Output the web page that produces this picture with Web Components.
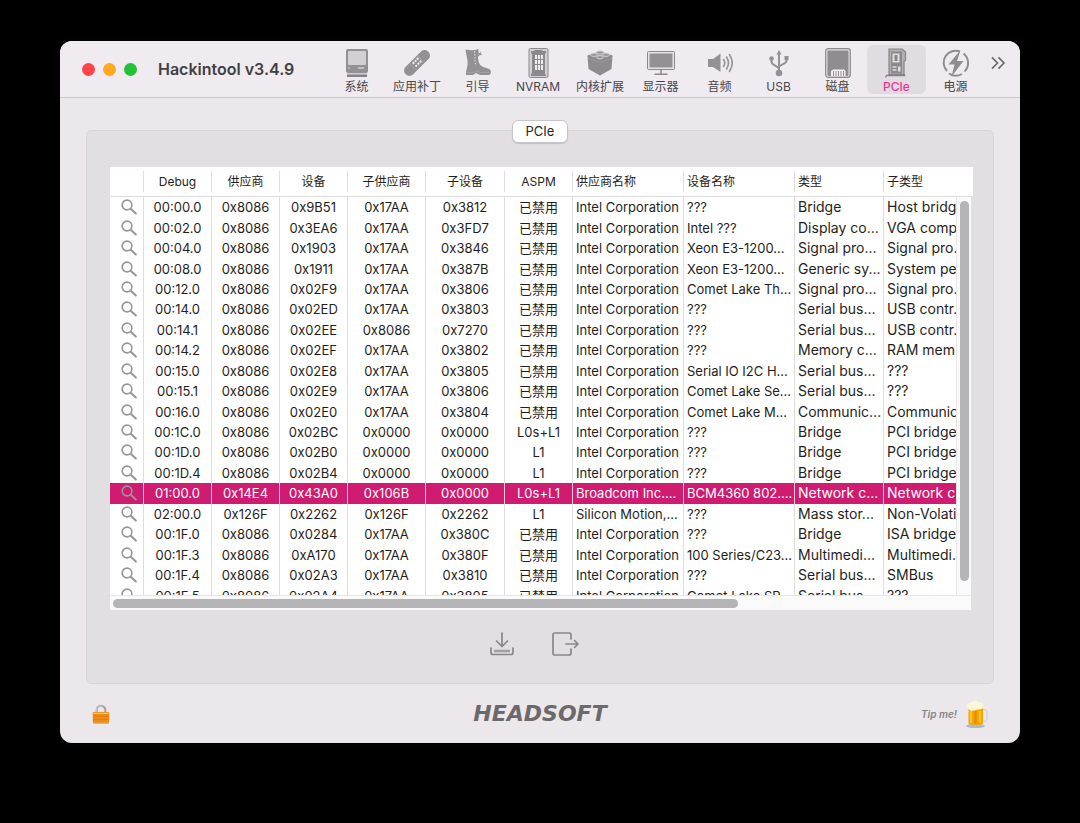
<!DOCTYPE html>
<html lang="zh-CN">
<head>
<meta charset="utf-8">
<title>Hackintool</title>
<style>
  body {
    margin: 0;
    background: #000;
    color: #1f1e20;
    font-family: Inter, "Noto Sans CJK SC", sans-serif;
    font-size: 13px;
  }
</style>
</head>
<body>
<hk-window>
  <hk-toolbar slot="toolbar" heading="Hackintool v3.4.9">
    <hk-tool icon="system" label="系统"></hk-tool>
    <hk-tool icon="patch" label="应用补丁" wide></hk-tool>
    <hk-tool icon="boot" label="引导"></hk-tool>
    <hk-tool icon="nvram" label="NVRAM" wide></hk-tool>
    <hk-tool icon="kext" label="内核扩展" wide></hk-tool>
    <hk-tool icon="display" label="显示器"></hk-tool>
    <hk-tool icon="audio" label="音频"></hk-tool>
    <hk-tool icon="usb" label="USB"></hk-tool>
    <hk-tool icon="disk" label="磁盘"></hk-tool>
    <hk-tool icon="pcie" label="PCIe" selected></hk-tool>
    <hk-tool icon="power" label="电源"></hk-tool>
  </hk-toolbar>
  <hk-panel tab="PCIe">
    <hk-devices></hk-devices>
    <hk-action slot="actions" icon="save" label="Save"></hk-action>
    <hk-action slot="actions" icon="export" label="Export"></hk-action>
  </hk-panel>
  <hk-footer slot="footer"></hk-footer>
</hk-window>

<script>
const ICONS = {
  system: '<rect x="3" y="0" width="22" height="24" rx="2" fill="#939194"/><rect x="5" y="2" width="18" height="14" rx="1" fill="#d2d0d3"/><path d="M15 19h6" stroke="#eee" stroke-width="1.2"/><circle cx="6" cy="19" r=".7" fill="#eee"/><path d="M4 24.500h20V28H4z" fill="#858386"/><path d="M4 25h20" stroke="#eee" stroke-width=".8"/>',
  patch: '<g transform="rotate(-45 14 14)"><rect x="-2" y="8.700" width="32" height="10.600" rx="5" fill="#939194"/><path d="M8.500 9v10.500M19.500 9v10.500" stroke="#a9a7aa" stroke-width=".7"/><g fill="#f0ebf0"><rect x="10.500" y="10.500" width="2" height="2"/><rect x="13.500" y="10.500" width="2" height="2"/><rect x="16.500" y="10.500" width="2" height="2"/><rect x="10.500" y="14.500" width="2" height="2"/><rect x="13.500" y="14.500" width="2" height="2"/><rect x="16.500" y="14.500" width="2" height="2"/></g></g>',
  boot: '<path d="M1.500.5C6 1.500 10 1.500 14.500 0c.3 4-.8 8-.3 11 .5 4 3 6.500 6.300 7.500 3.500 1 6.500 1.500 6.500 4.500 0 2-1 3-3 3h-8l-4-2-3 2H2c-.5-5 2.500-9 1.500-14C3 8 2 5 1.500.5z" fill="#939194"/><path d="M10.500 2c1 5-.5 9 1.500 14" fill="none" stroke="#e8e4e8" stroke-width="1" stroke-dasharray="1.500 1.500"/><path d="M14 7l3-3.500M14 4l3.500 2" fill="none" stroke="#939194" stroke-width="1.200"/><path d="M2.500 23.500h7l3-1.500 4 1.500h10" fill="none" stroke="#aeabae" stroke-width=".6"/>',
  nvram: '<rect x="5" y="-.5" width="19" height="29" rx="1.500" fill="#d4d1d4" stroke="#8b898c"/><path d="M7 2h3l1-1h7l1 1h3v2l-1 1v20l1 1v1H7v-2l1-1V5L7 4z" fill="#8b898c"/><g fill="#efecef"><rect x="11" y="6" width="2" height="4"/><rect x="14" y="6" width="2" height="4"/><rect x="17" y="6" width="2" height="4"/><rect x="11" y="11" width="2" height="4"/><rect x="14" y="11" width="2" height="4"/><rect x="17" y="11" width="2" height="4"/><rect x="11" y="16" width="2" height="5"/><rect x="14" y="16" width="2" height="5"/><rect x="17" y="16" width="2" height="5"/></g>',
  kext: '<path d="M1.500 6.500 14 2l12.500 4.500-1 13.500L14 26.500 2.500 20z" fill="#8d8b8e"/><g fill="#9a989b" stroke="#e6e2e6" stroke-width=".7"><ellipse cx="14" cy="3.500" rx="3.500" ry="1.700"/><ellipse cx="8" cy="5.800" rx="3.500" ry="1.700"/><ellipse cx="20" cy="5.800" rx="3.500" ry="1.700"/><ellipse cx="14" cy="8.200" rx="3.500" ry="1.700"/></g><path d="M2 9l12 4.500L26 9" fill="none" stroke="#9d9b9e" stroke-width=".7"/>',
  display: '<rect x=".5" y="2.500" width="27" height="18" rx="1" fill="#e6e3e6" stroke="#8b898c"/><rect x="2.500" y="4.500" width="23" height="14" fill="#939194"/><path d="M14 20.500v4M7.500 25.200h13" stroke="#8b898c" stroke-width="1.500"/>',
  audio: '<path d="M2 10h5l7.500-5.500v18.500L7 18H2z" fill="#939194"/><g fill="none" stroke="#939194" stroke-width="1.600" stroke-linecap="round"><path d="M17.500 10.500q2.500 3.500 0 7M20.500 8q4 6 0 12M23.500 5.500q5.500 8.500 0 17"/></g>',
  usb: '<g fill="none" stroke="#939194" stroke-width="2"><path d="M14 4v19M6.500 10v3c0 3 6.500 4 7.500 7M21.500 9v3c0 3-6.500 3-7.500 6"/></g><path d="M14 1l2.500 4.500h-5z" fill="#939194"/><circle cx="14" cy="24" r="3.300" fill="#939194"/><circle cx="6.500" cy="9.500" r="2.300" fill="#939194"/><rect x="19.500" y="7" width="4" height="4" fill="#939194"/>',
  disk: '<rect x="1.700" y="-.3" width="24.600" height="28.600" rx="2.500" fill="#e2dfe2" stroke="#8b898c" stroke-width="1.200"/><rect x="3.500" y="1.500" width="21" height="25.500" rx="1" fill="#8f8d90"/><path d="M7 27v-5l2-1.500h11l1.500 1.500v5z" fill="#f3f0f3"/><path d="M9.500 22v5M12 22v5M14.500 22v5M17 22v5M19.500 22v5" stroke="#8f8d90" stroke-width="1"/>',
  pcie: '<path d="M6 0h13l3.500 3v8l-1.500 2v12.500H6z" fill="#b2b0b3" stroke="#858386" stroke-width="1.200"/><path d="M8 2.500h11v22H8z" fill="#8b898c"/><rect x="9.500" y="4.500" width="7" height="9" fill="#e0dde0"/><rect x="11.500" y="6" width="3" height="6" fill="#858386"/><path d="M9.500 18h4M9.500 21h4" stroke="#dedbde" stroke-width="1.400"/><rect x="15" y="17.500" width="2.500" height="5" fill="#dedbde"/><path d="M2.500 28.500l1-2h18V25" fill="none" stroke="#858386" stroke-width="1.300"/>',
  power: '<g fill="none" stroke="#8f8d90" stroke-width="2"><path d="M18 2.500A12 12 0 0 0 5 22"/><path d="M7 24.500A12 12 0 0 0 20 25"/><path d="M21.500 4.500A12 12 0 0 1 22.500 22.500"/></g><path d="M18.500 1 6.500 15.500h6L9.500 27.500 21.500 12h-6.500z" fill="#8f8d90"/>',
  more: '<path d="M7.500 8l6 6-6 6M14.500 8l6 6-6 6" fill="none" stroke="#6a686b" stroke-width="1.700"/>',
  search: '<g fill="none" stroke="#98969a" stroke-width="2.800" stroke-linecap="round"><circle cx="10.500" cy="10.500" r="8.500"/><path d="M17 17l9 8.500" stroke-width="3.500"/></g>',
  save: '<g fill="none" stroke="#89878a" stroke-width="1.700" stroke-linecap="round" stroke-linejoin="round"><path d="M14 3v13M8.500 11l5.500 5.500 5.500-5.500M3 18v4.500q0 2 2 2h18q2 0 2-2V18"/></g><path d="M6 21h16" stroke="#a19fa2" stroke-width="2.500"/>',
  export: '<g fill="none" stroke="#89878a" stroke-width="1.700" stroke-linecap="round" stroke-linejoin="round"><path d="M20 9V5q0-2-2-2H4Q2 3 2 5v18q0 2 2 2h14q2 0 2-2v-4M15 14h12M23.500 10.500 27 14l-3.500 3.500"/></g>',
  lock: '<path d="M8.500 15V9a5.500 5.500 0 0 1 11 0v6" fill="none" stroke="#9fa2a8" stroke-width="2.600"/><path d="M8 12V9a6 6 0 0 1 8-5" fill="none" stroke="#d7d9dc" stroke-width="1"/><path d="M4 25.500h20" stroke="#b6a595" stroke-width="1.500"/><rect x="3.500" y="11.500" width="21" height="13.500" rx="1.500" fill="#ee8b16"/><path d="M4.500 13.300h19" stroke="#ffc45c" stroke-width="1.500"/><path d="M4.500 17h19M4.500 21h19" stroke="#d97706" stroke-width=".8"/>',
  beer: '<path d="M20 10h2.500q2.500 0 2.500 3v5q0 3-2.500 3H20" fill="none" stroke="#d4dce2" stroke-width="1.800"/><ellipse cx="13.500" cy="26" rx="9.500" ry="2" fill="#a9bcc8"/><path d="M6.500 7h14.500v17q-7 2-14.500 0z" fill="#f5a400"/><path d="M9 11v12M18 11v12" stroke="#fcc629" stroke-width="2.200"/><path d="M13.500 11v13" stroke="#e68a00" stroke-width="2"/><path d="M5.500 8c-1.500-4 2-5 3.500-5 2-3 6-3 8-.5 3.500-.5 5.500 2 4 5.500-2.500 2-5 1-7 2-3 1.500-6.500 1-8.500-2z" fill="#fdf6d8"/>'
};

function define(name, build) {
  customElements.define(name, class extends HTMLElement {
    constructor() {
      super();
      this.attachShadow({ mode: 'open' });
    }
    connectedCallback() {
      this.shadowRoot.innerHTML = build(this);
    }
  });
}

define('hk-icon', el => `
  <style>
    :host { display: block; width: 28px; height: 28px; flex: none; }
    svg { display: block; width: 100%; height: 100%; overflow: visible; }
  </style>
  <svg viewBox="0 0 28 28" aria-hidden="true">${ICONS[el.getAttribute('name')]}</svg>`);

define('hk-tool', el => `
  <style>
    :host { display: block; flex: none; width: 59px; }
    :host([wide]) { width: 62px; }
    button {
      display: flex; flex-direction: column; align-items: center; gap: 2px;
      box-sizing: border-box; width: 100%; height: 49px; padding: 4px 0 0;
      border: 0; border-radius: 6px; background: none;
      font: inherit; font-size: 12px; line-height: 16px; color: #484649; white-space: nowrap;
    }
    :host([selected]) button { background: #e1dce1; color: #f03293; font-weight: 500; }
  </style>
  <button type="button"><hk-icon name="${el.getAttribute('icon')}"></hk-icon><span>${el.getAttribute('label')}</span></button>`);

define('hk-toolbar', el => `
  <style>
    :host {
      display: flex; align-items: center; box-sizing: border-box; height: 57px;
      padding: 0 9px 0 22px; background: #f0ebf0; border-bottom: 1px solid #cbc6cb;
    }
    .lights { display: flex; gap: 8px; margin-right: 21px; }
    .lights button { width: 13px; height: 13px; padding: 0; border: 0; border-radius: 50%; }
    .close { background: #fd4447; }
    .min { background: #fdaa20; }
    .max { background: #22c136; }
    h1 { flex: 1; margin: 0; font-size: 16px; line-height: 20px; font-weight: 600; color: #414042; white-space: nowrap; }
    .more { padding: 0; border: 0; background: none; margin: 0 0 12px; }
    .more hk-icon { width: 26px; }
  </style>
  <div class="lights">
    <button class="close" type="button" aria-label="Close"></button>
    <button class="min" type="button" aria-label="Minimize"></button>
    <button class="max" type="button" aria-label="Zoom"></button>
  </div>
  <h1>${el.getAttribute('heading')}</h1>
  <slot></slot>
  <button class="more" type="button" aria-label="More"><hk-icon name="more"></hk-icon></button>`);

define('hk-window', () => `
  <style>
    :host {
      display: block; margin: 41px 60px; overflow: hidden;
      border-radius: 12px; background: #ece7ea;
    }
    main { padding: 32px 26px 0; }
  </style>
  <slot name="toolbar"></slot>
  <main><slot></slot></main>
  <slot name="footer"></slot>`);

define('hk-panel', el => `
  <style>
    :host {
      display: block; position: relative; padding: 36px 20px 25px 23px;
      background: #e2dfe2; border: 1px solid #d8d4d8; border-radius: 5px;
    }
    .tab {
      position: absolute; top: -11px; left: 50%; transform: translateX(-50%);
      height: 23px; width: 56px; padding: 0 0 2px; border: 1px solid #c8c5c8; border-radius: 6px;
      background: #fff; font: inherit; line-height: 18px; color: #272628;
      box-shadow: 0 1px 1px #0002;
    }
    .actions { display: flex; justify-content: center; gap: 35px; padding: 20px 16px 0 0; }
  </style>
  <button class="tab" type="button">${el.getAttribute('tab')}</button>
  <slot></slot>
  <div class="actions"><slot name="actions"></slot></div>`);

define('hk-action', el => `
  <style>
    :host { display: block; }
    button { display: block; padding: 0; border: 0; background: none; }
  </style>
  <button type="button" aria-label="${el.getAttribute('label')}"><hk-icon name="${el.getAttribute('icon')}"></hk-icon></button>`);

define('hk-footer', () => `
  <style>
    :host {
      display: grid; grid-template-columns: 1fr auto 1fr; align-items: center;
      height: 59px; padding: 0 30px;
    }
    .lock { width: 22px; height: 22px; }
    .brand { font: italic bold 22px/24px "DejaVu Sans", sans-serif; color: #6b696c; text-decoration: none; }
    .tip { justify-self: end; display: flex; align-items: center; gap: 5px; font-size: 10px; font-style: italic; font-weight: 600; color: #858386; text-decoration: none; }
  </style>
  <hk-icon class="lock" name="lock"></hk-icon>
  <a class="brand" href="#headsoft">HEADSOFT</a>
  <a class="tip" href="#tip">Tip me!<hk-icon name="beer"></hk-icon></a>`);

const COLUMNS = [['', 34], ['Debug', 68], ['供应商', 68], ['设备', 68], ['子供应商', 78], ['子设备', 79], ['ASPM', 68],
  ['供应商名称', 111], ['设备名称', 111], ['类型', 89], ['子类型', 89]];
const OFF = '已禁用', INTEL = 'Intel Corporation';
const DEVICES = [
  ['00:00.0', '0x8086', '0x9B51', '0x17AA', '0x3812', OFF, INTEL, '???', 'Bridge', 'Host bridge'],
  ['00:02.0', '0x8086', '0x3EA6', '0x17AA', '0x3FD7', OFF, INTEL, 'Intel ???', 'Display co...', 'VGA comp...'],
  ['00:04.0', '0x8086', '0x1903', '0x17AA', '0x3846', OFF, INTEL, 'Xeon E3-1200...', 'Signal pro...', 'Signal pro...'],
  ['00:08.0', '0x8086', '0x1911', '0x17AA', '0x387B', OFF, INTEL, 'Xeon E3-1200...', 'Generic sy...', 'System pe...'],
  ['00:12.0', '0x8086', '0x02F9', '0x17AA', '0x3806', OFF, INTEL, 'Comet Lake Th...', 'Signal pro...', 'Signal pro...'],
  ['00:14.0', '0x8086', '0x02ED', '0x17AA', '0x3803', OFF, INTEL, '???', 'Serial bus...', 'USB contr...'],
  ['00:14.1', '0x8086', '0x02EE', '0x8086', '0x7270', OFF, INTEL, '???', 'Serial bus...', 'USB contr...'],
  ['00:14.2', '0x8086', '0x02EF', '0x17AA', '0x3802', OFF, INTEL, '???', 'Memory c...', 'RAM mem...'],
  ['00:15.0', '0x8086', '0x02E8', '0x17AA', '0x3805', OFF, INTEL, 'Serial IO I2C H...', 'Serial bus...', '???'],
  ['00:15.1', '0x8086', '0x02E9', '0x17AA', '0x3806', OFF, INTEL, 'Comet Lake Se...', 'Serial bus...', '???'],
  ['00:16.0', '0x8086', '0x02E0', '0x17AA', '0x3804', OFF, INTEL, 'Comet Lake M...', 'Communic...', 'Communic...'],
  ['00:1C.0', '0x8086', '0x02BC', '0x0000', '0x0000', 'L0s+L1', INTEL, '???', 'Bridge', 'PCI bridge'],
  ['00:1D.0', '0x8086', '0x02B0', '0x0000', '0x0000', 'L1', INTEL, '???', 'Bridge', 'PCI bridge'],
  ['00:1D.4', '0x8086', '0x02B4', '0x0000', '0x0000', 'L1', INTEL, '???', 'Bridge', 'PCI bridge'],
  ['01:00.0', '0x14E4', '0x43A0', '0x106B', '0x0000', 'L0s+L1', 'Broadcom Inc....', 'BCM4360 802....', 'Network c...', 'Network c...'],
  ['02:00.0', '0x126F', '0x2262', '0x126F', '0x2262', 'L1', 'Silicon Motion,...', '???', 'Mass stor...', 'Non-Volati...'],
  ['00:1F.0', '0x8086', '0x0284', '0x17AA', '0x380C', OFF, INTEL, '???', 'Bridge', 'ISA bridge'],
  ['00:1F.3', '0x8086', '0xA170', '0x17AA', '0x380F', OFF, INTEL, '100 Series/C23...', 'Multimedi...', 'Multimedi...'],
  ['00:1F.4', '0x8086', '0x02A3', '0x17AA', '0x3810', OFF, INTEL, '???', 'Serial bus...', 'SMBus'],
  ['00:1F.5', '0x8086', '0x02A4', '0x17AA', '0x3805', OFF, INTEL, 'Comet Lake SP...', 'Serial bus...', '???']
];
const SELECTED = 14;

define('hk-devices', () => `
  <style>
    :host { display: block; position: relative; }
    .view { height: 428px; overflow: hidden; background: #fff; }
    table { table-layout: fixed; border-collapse: separate; border-spacing: 0; width: 863px; height: 439px; }
    th, td { box-sizing: border-box; padding: 0; overflow: hidden; white-space: nowrap; text-align: center; font-weight: 400; }
    th { height: 30px; font-size: 12px; border-bottom: 1px solid #dedcde; }
    th span { display: block; line-height: 20px; padding-top: 1px; border-right: 1px solid #dedcde; }
    th:last-child span { border: 0; }
    td { line-height: 18px; border-right: 1px solid #dedcde; }
    th:nth-child(n+8), td:nth-child(n+8) { text-align: left; padding-left: 3px; }
    td:nth-child(n+10) { font-size: 14px; }
    td button { display: block; margin: 0 auto; padding: 0 0 0 5px; border: 0; background: none; }
    td hk-icon { width: 16px; height: 16px; }
    .selected td { background: #cf1b70; color: #fff; border-color: #f3c5da; }
    .vertical { position: absolute; top: 30px; right: 0; bottom: 15px; width: 15px; background: #fafafa; border-left: 1px solid #e8e6e8; border-right: 2px solid #e2dfe2; box-sizing: content-box; width: 14px; }
    .vertical i { display: block; width: 9px; height: 380px; margin: 4px 0 0 3px; border-radius: 5px; background: #b4b3b5; }
    .horizontal { height: 15px; margin-right: 2px; background: #fafafa; box-shadow: inset 0 1px #e8e6e8; overflow: hidden; }
    .horizontal i { display: block; width: 625px; height: 9px; margin: 4px 0 0 3px; border-radius: 5px; background: #b4b3b5; }
  </style>
  <div class="view">
    <table>
      <colgroup>${COLUMNS.map(c => `<col style="width:${c[1]}px">`).join('')}</colgroup>
      <thead><tr>${COLUMNS.map(c => `<th scope="col"><span>${c[0] || '&nbsp;'}</span></th>`).join('')}</tr></thead>
      <tbody>${DEVICES.map((d, i) => `<tr${i === SELECTED ? ' class="selected"' : ''}><td><button type="button" aria-label="Search"><hk-icon name="search"></hk-icon></button></td>${d.map(t => `<td>${t}</td>`).join('')}</tr>`).join('')}</tbody>
    </table>
  </div>
  <div class="vertical"><i></i></div>
  <div class="horizontal"><i></i></div>`);
</script>
</body>
</html>
